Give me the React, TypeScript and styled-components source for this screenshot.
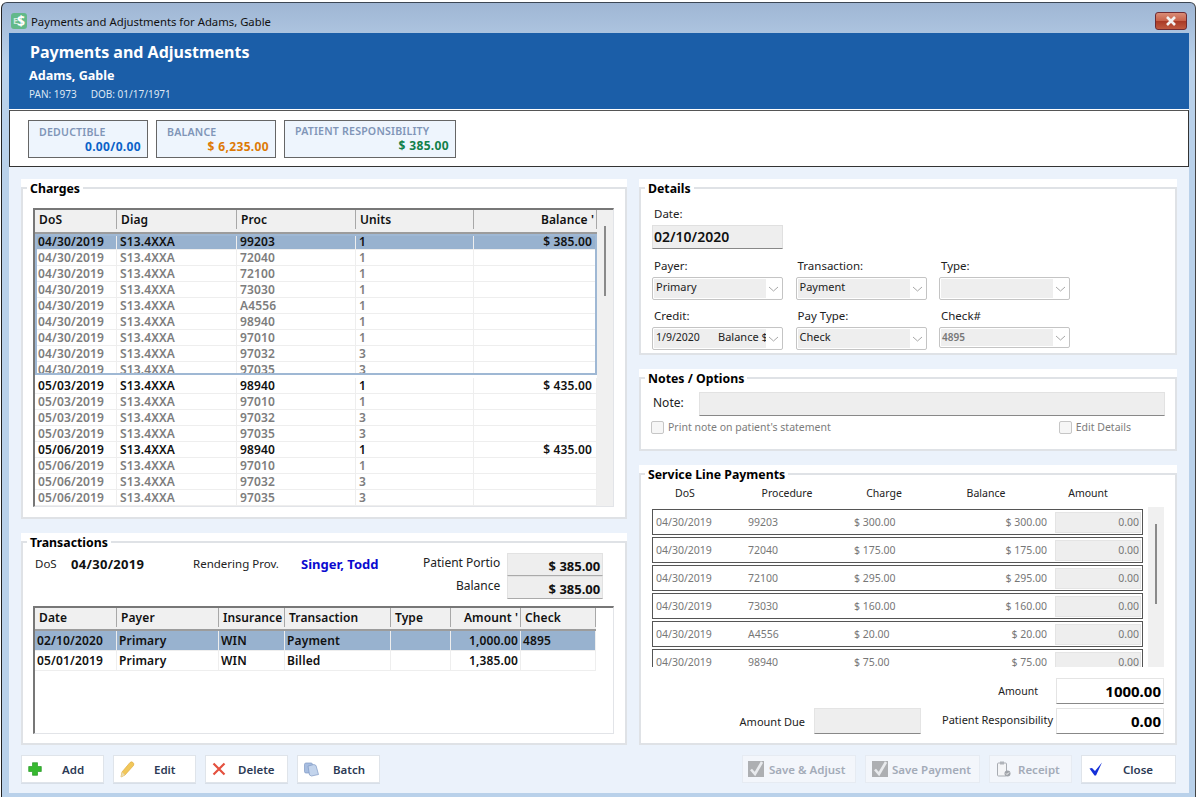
import React from "react";
import styled, { createGlobalStyle } from "styled-components";

const Global = createGlobalStyle`
  html, body { margin: 0; padding: 0; background: #fff; }
  * { box-sizing: border-box; }
  body { font-family: "Noto Sans", "Open Sans", "Liberation Sans", sans-serif; font-size: 12px; color: #111; }
`;

const Frame = styled.div`
  width: 1195px; height: 795px; margin: 2px 0 0 1px; overflow: hidden;
  background: linear-gradient(#9fb6d4 0, #b9d1ea 60px, #b9d1ea 100%);
  border-top: 1px solid #3c4654; border-left: 1px solid #222; border-right: 1px solid #444;
  border-top-left-radius: 6px; border-top-right-radius: 6px;
  display: flex; flex-direction: column;
`;
const TitleBar = styled.div`
  height: 30px; flex: none; display: flex; align-items: center; padding: 6px 8px 0 9px; gap: 4px;
  font-size: 11.3px; color: #111;
`;
const AppIcon = styled.div`
  width: 16px; height: 16px; border-radius: 3px; background: #62b98a; color: #fff;
  font-size: 14px; font-weight: 700; display: flex; align-items: center; justify-content: center; line-height: 16px;
`;
const AppIconE = styled.span`font-size: 9px; color: #cfe8da; margin-right: -1px;`;
const CloseBtn = styled.div`
  margin-left: auto; width: 32px; height: 18px; border-radius: 3px; border: 1px solid #6e2b33;
  background: linear-gradient(#d98c76 0, #c8624a 48%, #a93a26 52%, #c05a40 100%);
  display: flex; align-items: center; justify-content: center;
`;
const Client = styled.div`
  margin: 0 6px 0 7px; flex: 1; display: flex; flex-direction: column; min-height: 0;
`;
const Banner = styled.div`
  height: 77px; flex: none; background: #1b5ea8; color: #fff; padding: 8px 0 0 20px; border-bottom: 1px solid #fff;
`;
const BannerTitle = styled.div`font-size: 16px; font-weight: 700; line-height: 22px; padding-left: 1px;`;
const BannerName = styled.div`font-size: 12.6px; font-weight: 700; line-height: 16px; margin-top: 5px;`;
const BannerMeta = styled.div`font-size: 10px; line-height: 14px; margin-top: 3px; color: #dfe8f4; display: flex; gap: 14px;`;
const Band = styled.div`
  height: 57px; flex: none; background: #fff; border: 1px solid #333; border-top-color: #555; padding: 9px 18px; display: flex; gap: 8px;
`;
const Stat = styled.div<{ $w: number; $top: number }>`
  width: ${p => p.$w}px; height: 38px; border: 1px solid #666; background: #eef5fd; padding: ${p => p.$top}px 6px 0 10px;
  display: flex; flex-direction: column;
`;
const StatLabel = styled.div`font-size: 10.6px; font-weight: 600; color: #8095b8; line-height: 14px; white-space: nowrap; letter-spacing: .2px;`;
const StatValue = styled.div<{ $c: string }>`font-size: 12px; font-weight: 700; color: ${p => p.$c}; text-align: right; line-height: 16px; letter-spacing: .35px;`;
const Body = styled.div`
  flex: 1; background: #ebf2fb; padding: 12px 0 0 12px; display: flex; flex-direction: column; min-height: 0; margin-bottom: 4px;
`;
const Columns = styled.div`
  display: grid; grid-template-columns: 606px 538px; gap: 12px; height: 566px;
`;
const Column = styled.div`display: flex; flex-direction: column; gap: 14px; min-height: 0;`;
const Panel = styled.div<{ $h: number }>`
  height: ${p => p.$h}px; background: #fff; padding-top: 3px; display: flex;
`;
const Fieldset = styled.fieldset`
  flex: 1; min-width: 0; margin: 0; border: 2px solid #dfe2e6; padding: 0; position: relative;
`;
const Legend = styled.legend`
  font-size: 12.3px; font-weight: 700; padding: 0 3px; margin-left: 4px; line-height: 12px; color: #000; position: relative; top: 1px;
`;
/* --- grid tables --- */
const TableBox = styled.div<{ $h: number; $top: number }>`
  margin: ${p => p.$top}px 11px 0 10px; height: ${p => p.$h}px; border: 1px solid #e2e4e8; border-top: 2px solid #777; border-left: 2px solid #777;
  position: relative; overflow: hidden; display: flex;
`;
const TableMain = styled.div<{ $w: number }>`width: ${p => p.$w}px; flex: none; display: flex; flex-direction: column;`;
const HeadRow = styled.div<{ $cols: string; $h: number; $pb?: number }>`
  display: grid; grid-template-columns: ${p => p.$cols}; height: ${p => p.$h}px; background: #f0f0f0; border-bottom: 2px solid #9c9c9c;
  flex: none; padding-bottom: ${p => p.$pb ?? 0}px;
`;
const HeadCell = styled.div<{ $right?: boolean }>`
  font-size: 12px; font-weight: 600; padding: 0 2px 0 4px; display: flex; align-items: center; white-space: nowrap; overflow: hidden;
  justify-content: ${p => (p.$right ? "flex-end" : "flex-start")}; border-right: 1px solid #a8a8a8; color: #111; letter-spacing: .1px;
`;
const Row = styled.div<{ $cols: string; $h: number; $sel?: boolean; $bold?: boolean }>`
  display: grid; grid-template-columns: ${p => p.$cols}; height: ${p => p.$h}px; flex: none;
  background: ${p => (p.$sel ? "#98b2cf" : "#fff")}; border-bottom: 1px solid #eee;
  color: ${p => (p.$sel || p.$bold ? "#111" : "#7d7d7d")};
`;
const Cell = styled.div<{ $right?: boolean; $pl?: number; $pr?: number }>`
  font-size: 12px; font-weight: 600; padding: 0 ${p => p.$pr ?? 2}px 0 ${p => p.$pl ?? 2}px; display: flex; align-items: center; white-space: nowrap; overflow: hidden; line-height: 15px;
  justify-content: ${p => (p.$right ? "flex-end" : "flex-start")}; border-right: 1px solid #eee; letter-spacing: .15px;
`;
const Group = styled.div`padding-bottom: 3px; height: 144px; flex: none;`;
const GroupView = styled.div`height: 141px; overflow: hidden; outline: 2px solid #9fb8d4; outline-offset: -2px;`;
const VScroll = styled.div<{ $thumbTop: number; $thumbH: number }>`
  width: 16px; flex: none; background: #f0f0f0; position: relative;
  &::after { content: ""; position: absolute; left: 7px; width: 2px; top: ${p => p.$thumbTop}px; height: ${p => p.$thumbH}px; background: #8a8a8a; }
`;
/* --- transactions --- */
const InfoRow = styled.div`
  height: 50px; margin: 4px 23px 0 12px; display: flex; position: relative;
`;
const InfoLabel = styled.div<{ $w: number }>`width: ${p => p.$w}px; font-size: 11.5px; line-height: 18px; padding-top: 3px; color: #222; flex: none;`;
const InfoDate = styled.div`width: 122px; font-size: 13px; font-weight: 700; line-height: 18px; padding-top: 3px; letter-spacing: .3px; flex: none;`;
const InfoName = styled.div`width: 122px; font-size: 13px; font-weight: 700; line-height: 18px; padding-top: 3px; color: #0a0ad0; flex: none;`;
const Totals = styled.div`margin-left: auto; display: grid; grid-template-columns: auto 96px; align-content: start; column-gap: 7px; margin-top: 1px;`;
const TotalLabel = styled.div`font-size: 12px; text-align: right; line-height: 18px; color: #222; padding-top: 1px; white-space: nowrap;`;
const TotalField = styled.div`
  height: 23px; background: #eee; border: 1px solid #e2e2e2; border-bottom: 1px solid #aaa;
  font-size: 13px; font-weight: 700; text-align: right; line-height: 24px; padding-right: 2px;
`;
/* --- details --- */
const FieldLabel = styled.div`font-size: 11.5px; line-height: 14px; color: #222; margin: 0 0 4px 2px;`;
const DateField = styled.div`
  width: 131px; height: 24px; background: #eee; border: 1px solid #e0e0e0; border-bottom: 1px solid #888;
  font-size: 14px; font-weight: 600; line-height: 21px; padding-left: 1px; letter-spacing: 0;
`;
const DetailsInner = styled.div`padding: 13px 12px 0 11px;`;
const ComboGrid = styled.div`
  display: grid; grid-template-columns: repeat(3, 131px); column-gap: 12.5px; row-gap: 9px; margin-top: 10px;
`;
const Combo = styled.div<{ $small?: boolean }>`
  height: ${p => (p.$small ? 21 : 23)}px; border: 1px solid #c4c4c4; border-radius: 2px; background: #fff; padding: 1px; display: flex; position: relative;
  font-size: 11px; line-height: 16px;
`;
const ComboFace = styled.div<{ $dim?: boolean }>`
  width: 112px; background: #eee; padding: 0 ${p => (p.$dim ? 1 : 2)}px; white-space: nowrap; overflow: hidden; color: ${p => (p.$dim ? "#777" : "#222")};
  font-weight: ${p => (p.$dim ? 600 : 400)}; font-size: ${p => (p.$dim ? "10px" : "11px")}; display: flex; align-items: flex-start;
`;
const CreditDate = styled.span`width: 62px; flex: none; font-size: 10.5px;`;
const Chevron = styled.div`flex: 1; display: flex; align-items: center; justify-content: center; padding-top: 1px;`;
const NotesInner = styled.div`padding: 8px 10px 0 11px;`;
const NoteRow = styled.div`display: flex; align-items: center; gap: 15px; font-size: 12px; color: #222; padding-left: 1px;`;
const NoteLabel = styled.span`margin-bottom: 3px;`;
const NoteField = styled.div`flex: 1; height: 24px; background: #eee; border: 1px solid #e2e2e2; border-bottom: 1px solid #888;`;
const CheckRow = styled.div`display: flex; justify-content: space-between; margin: 3px 0 0 -1px; padding-right: 34px;`;
const CheckItem = styled.label`display: flex; align-items: center; gap: 4px; font-size: 10.5px; color: #7c7c7c; line-height: 16px;`;
const Box = styled.span`width: 13px; height: 13px; border: 1px solid #c6c6c6; border-radius: 2px; background: #f6f6f6; display: inline-block;`;
/* --- service lines --- */
const SvcHead = styled.div`
  display: grid; grid-template-columns: 88px 116px 78px 126px 78px; margin: 4px 0 0 0; height: 18px; align-items: center; font-size: 10.5px; color: #222;
`;
const SvcHeadCell = styled.div`text-align: center;`;
const SvcWrap = styled.div`display: flex; margin: 5px 11px 0 11px; height: 160px; gap: 5px;`;
const SvcList = styled.div`width: 492px; overflow: hidden; display: flex; flex-direction: column; gap: 2px; padding-top: 2px;`;
const SvcRow = styled.div`
  height: 26px; flex: none; border: 1px solid #555; display: grid; grid-template-columns: 92px 106px 100px 1fr 95px; align-items: center;
  font-size: 10.5px; color: #777; padding-left: 3px;
`;
const SvcAmt = styled.div`
  height: 21px; margin: 0 1px 0 8px; background: #eee; border: 1px solid #e4e4e4; text-align: right; padding-right: 1px; line-height: 19px;
`;
const Right = styled.div`text-align: right;`;
const Totals2 = styled.div`margin: 11px 11px 0 0; display: flex; flex-direction: column; gap: 4px;`;
const TotalLine = styled.div`display: flex; justify-content: flex-end; align-items: center; height: 26px; font-size: 11px; color: #222;`;
const BigField = styled.div<{ $grey?: boolean }>`
  width: ${p => (p.$grey ? 107 : 108)}px; height: 26px; background: ${p => (p.$grey ? "#eee" : "#fff")};
  border: 1px solid #e4e4e4; border-bottom: 1px solid #888; font-size: 15px; font-weight: 700; text-align: right; line-height: 25px; padding-right: 2px; color: #000;
`;
const DueLabel = styled.span`margin-right: 9px;`;
const RespLabel = styled.span`margin: 0 3px 0 21px; position: relative; top: -2px;`;
const AmtLabel = styled.span`margin-right: 18px; font-size: 10.5px;`;
/* --- footer --- */
const Footer = styled.div`display: flex; justify-content: space-between; margin-top: 10px; width: 1155px;`;
const BtnGroup = styled.div`display: flex; gap: 9px;`;
const Btn = styled.div<{ $w: number; $off?: boolean; $gap: number; $pad: number }>`
  width: ${p => p.$w}px; height: 28px; border: 1px solid #dfe4ea; box-shadow: 0 1px 0 #d8dfe8;
  ${p => p.$off ? "background: #f3f6fb; color: #a3abb8; border-color: #e6ebf2; box-shadow: none;" : "background: #fff; color: #2c3a55;"}
  display: flex; align-items: center; padding-left: ${p => p.$pad - 1}px; gap: ${p => p.$gap}px; font-size: 11.5px; font-weight: 600; white-space: nowrap;
  & svg { flex: none; }
`;

const chevron = (
  <svg width="11" height="6" viewBox="0 0 11 6" fill="none"><path d="M1 1l4.5 4L10 1" stroke="#a8a8a8" strokeWidth="1" /></svg>
);
const checkGrey = (
  <svg width="16" height="16" viewBox="0 0 16 16"><rect x="0" y="0" width="16" height="16" fill="#adafb2" /><path d="M3 8.5l4 4.5 7-12" fill="none" stroke="#e9ebee" strokeWidth="2.6" /></svg>
);

const chargeCols = "82px 120px 119px 118px 123px";
type C = [string, string, string, string, string, boolean?, boolean?];
const firstGroup: C[] = [
  ["04/30/2019", "S13.4XXA", "99203", "1", "$ 385.00", true, true],
  ["04/30/2019", "S13.4XXA", "72040", "1", ""],
  ["04/30/2019", "S13.4XXA", "72100", "1", ""],
  ["04/30/2019", "S13.4XXA", "73030", "1", ""],
  ["04/30/2019", "S13.4XXA", "A4556", "1", ""],
  ["04/30/2019", "S13.4XXA", "98940", "1", ""],
  ["04/30/2019", "S13.4XXA", "97010", "1", ""],
  ["04/30/2019", "S13.4XXA", "97032", "3", ""],
  ["04/30/2019", "S13.4XXA", "97035", "3", ""],
];
const rest: C[] = [
  ["05/03/2019", "S13.4XXA", "98940", "1", "$ 435.00", true],
  ["05/03/2019", "S13.4XXA", "97010", "1", ""],
  ["05/03/2019", "S13.4XXA", "97032", "3", ""],
  ["05/03/2019", "S13.4XXA", "97035", "3", ""],
  ["05/06/2019", "S13.4XXA", "98940", "1", "$ 435.00", true],
  ["05/06/2019", "S13.4XXA", "97010", "1", ""],
  ["05/06/2019", "S13.4XXA", "97032", "3", ""],
  ["05/06/2019", "S13.4XXA", "97035", "3", ""],
];
const ChargeRow = ({ r }: { r: C }) => (
  <Row $cols={chargeCols} $h={16} $bold={r[5]} $sel={r[6]}>
    <Cell $pl={3}>{r[0]}</Cell><Cell $pl={3}>{r[1]}</Cell><Cell $pl={3}>{r[2]}</Cell><Cell $pl={3}>{r[3]}</Cell><Cell $right $pr={4}>{r[4]}</Cell>
  </Row>
);
const txCols = "82px 102px 66px 106px 60px 70px 75px";
const tx = [
  ["02/10/2020", "Primary", "WIN", "Payment", "", "1,000.00", "4895"],
  ["05/01/2019", "Primary", "WIN", "Billed", "", "1,385.00", ""],
];
const svc = [
  ["99203", "$ 300.00"], ["72040", "$ 175.00"], ["72100", "$ 295.00"], ["73030", "$ 160.00"], ["A4556", "$ 20.00"], ["98940", "$ 75.00"],
];

export default function App() {
  return (
    <Frame>
      <Global />
      <TitleBar>
        <AppIcon><AppIconE>E</AppIconE>$</AppIcon>
        <span>Payments and Adjustments for Adams, Gable</span>
        <CloseBtn>
          <svg width="14" height="10" viewBox="0 0 14 10"><path d="M3 1l8 8M11 1L3 9" stroke="#f2f2f2" strokeWidth="2.6" fill="none" /></svg>
        </CloseBtn>
      </TitleBar>
      <Client>
        <Banner>
          <BannerTitle>Payments and Adjustments</BannerTitle>
          <BannerName>Adams, Gable</BannerName>
          <BannerMeta><span>PAN: 1973</span><span>DOB: 01/17/1971</span></BannerMeta>
        </Banner>
        <Band>
          <Stat $w={120} $top={4}><StatLabel>DEDUCTIBLE</StatLabel><StatValue $c="#0a62c8">0.00/0.00</StatValue></Stat>
          <Stat $w={120} $top={4}><StatLabel>BALANCE</StatLabel><StatValue $c="#dd7a06">$ 6,235.00</StatValue></Stat>
          <Stat $w={172} $top={3}><StatLabel>PATIENT RESPONSIBILITY</StatLabel><StatValue $c="#12804a">$ 385.00</StatValue></Stat>
        </Band>
        <Body>
          <Columns>
            <Column>
              <Panel $h={340}>
                <Fieldset>
                  <Legend>Charges</Legend>
                  <TableBox $h={299} $top={14}>
                    <TableMain $w={562}>
                      <HeadRow $cols={chargeCols} $h={24} $pb={3}>
                        <HeadCell>DoS</HeadCell><HeadCell>Diag</HeadCell><HeadCell>Proc</HeadCell><HeadCell>Units</HeadCell><HeadCell $right>Balance '</HeadCell>
                      </HeadRow>
                      <Group><GroupView>{firstGroup.map((r, i) => <ChargeRow key={i} r={r} />)}</GroupView></Group>
                      {rest.map((r, i) => <ChargeRow key={i} r={r} />)}
                    </TableMain>
                    <VScroll $thumbTop={16} $thumbH={70} />
                  </TableBox>
                </Fieldset>
              </Panel>
              <Panel $h={212}>
                <Fieldset>
                  <Legend>Transactions</Legend>
                  <InfoRow>
                    <InfoLabel $w={36}>DoS</InfoLabel>
                    <InfoDate>04/30/2019</InfoDate>
                    <InfoLabel $w={108}>Rendering Prov.</InfoLabel>
                    <InfoName>Singer, Todd</InfoName>
                    <Totals>
                      <TotalLabel>Patient Portio</TotalLabel><TotalField>$ 385.00</TotalField>
                      <TotalLabel>Balance</TotalLabel><TotalField>$ 385.00</TotalField>
                    </Totals>
                  </InfoRow>
                  <TableBox $h={128} $top={4}>
                    <TableMain $w={561}>
                      <HeadRow $cols={txCols} $h={23} $pb={2}>
                        <HeadCell>Date</HeadCell><HeadCell>Payer</HeadCell><HeadCell>Insurance</HeadCell><HeadCell>Transaction</HeadCell><HeadCell>Type</HeadCell><HeadCell $right>Amount '</HeadCell><HeadCell>Check</HeadCell>
                      </HeadRow>
                      {tx.map((r, i) => (
                        <Row key={i} $cols={txCols} $h={20} $bold $sel={i === 0}>
                          <Cell>{r[0]}</Cell><Cell>{r[1]}</Cell><Cell>{r[2]}</Cell><Cell>{r[3]}</Cell><Cell>{r[4]}</Cell><Cell $right>{r[5]}</Cell><Cell>{r[6]}</Cell>
                        </Row>
                      ))}
                    </TableMain>
                  </TableBox>
                </Fieldset>
              </Panel>
            </Column>
            <Column>
              <Panel $h={176}>
                <Fieldset>
                  <Legend>Details</Legend>
                  <DetailsInner>
                    <FieldLabel>Date:</FieldLabel>
                    <DateField>02/10/2020</DateField>
                    <ComboGrid>
                      <div><FieldLabel>Payer:</FieldLabel><Combo><ComboFace>Primary</ComboFace><Chevron>{chevron}</Chevron></Combo></div>
                      <div><FieldLabel>Transaction:</FieldLabel><Combo><ComboFace>Payment</ComboFace><Chevron>{chevron}</Chevron></Combo></div>
                      <div><FieldLabel>Type:</FieldLabel><Combo><ComboFace /><Chevron>{chevron}</Chevron></Combo></div>
                      <div><FieldLabel>Credit:</FieldLabel><Combo><ComboFace><CreditDate>1/9/2020</CreditDate><span>Balance $</span></ComboFace><Chevron>{chevron}</Chevron></Combo></div>
                      <div><FieldLabel>Pay Type:</FieldLabel><Combo><ComboFace>Check</ComboFace><Chevron>{chevron}</Chevron></Combo></div>
                      <div><FieldLabel>Check#</FieldLabel><Combo $small><ComboFace $dim>4895</ComboFace><Chevron>{chevron}</Chevron></Combo></div>
                    </ComboGrid>
                  </DetailsInner>
                </Fieldset>
              </Panel>
              <Panel $h={82}>
                <Fieldset>
                  <Legend>Notes / Options</Legend>
                  <NotesInner>
                    <NoteRow><NoteLabel>Note:</NoteLabel><NoteField /></NoteRow>
                    <CheckRow>
                      <CheckItem><Box />Print note on patient's statement</CheckItem>
                      <CheckItem><Box />Edit Details</CheckItem>
                    </CheckRow>
                  </NotesInner>
                </Fieldset>
              </Panel>
              <Panel $h={280}>
                <Fieldset>
                  <Legend>Service Line Payments</Legend>
                  <SvcHead>
                    <SvcHeadCell>DoS</SvcHeadCell><SvcHeadCell>Procedure</SvcHeadCell><SvcHeadCell>Charge</SvcHeadCell><SvcHeadCell>Balance</SvcHeadCell><SvcHeadCell>Amount</SvcHeadCell>
                  </SvcHead>
                  <SvcWrap>
                    <SvcList>
                      {svc.map(s => (
                        <SvcRow key={s[0]}>
                          <span>04/30/2019</span><span>{s[0]}</span><span>{s[1]}</span><Right>{s[1]}</Right><SvcAmt>0.00</SvcAmt>
                        </SvcRow>
                      ))}
                    </SvcList>
                    <VScroll $thumbTop={17} $thumbH={80} />
                  </SvcWrap>
                  <Totals2>
                    <TotalLine><AmtLabel>Amount</AmtLabel><BigField>1000.00</BigField></TotalLine>
                    <TotalLine>
                      <DueLabel>Amount Due</DueLabel><BigField $grey />
                      <RespLabel>Patient Responsibility</RespLabel><BigField>0.00</BigField>
                    </TotalLine>
                  </Totals2>
                </Fieldset>
              </Panel>
            </Column>
          </Columns>
          <Footer>
            <BtnGroup>
              <Btn $w={83} $pad={7} $gap={20}>
                <svg width="14" height="14" viewBox="0 0 14 14"><path d="M4.5 0.7h5v3.8h3.8v5H9.500v3.800h-5V9.500H0.700v-5h3.800z" fill="#36b92f" stroke="#2a9a2a" strokeWidth=".7" /></svg>
                <span>Add</span>
              </Btn>
              <Btn $w={83} $pad={7} $gap={19}>
                <svg width="15" height="17" viewBox="0 0 15 17"><path d="M1 16l1-5L10 1.500q1.500-1.300 3 0t.5 3L5 14z" fill="#f1c75a" stroke="#dfae45" strokeWidth=".7" /><path d="M1 16l1-5 3 3z" fill="#ecdcae" /></svg>
                <span>Edit</span>
              </Btn>
              <Btn $w={83} $pad={7} $gap={12}>
                <svg width="14" height="14" viewBox="0 0 14 14"><path d="M1.500 1.500l11 11M12.500 1.500l-11 11" stroke="#e4513f" strokeWidth="2.200" /></svg>
                <span>Delete</span>
              </Btn>
              <Btn $w={83} $pad={7} $gap={14}>
                <svg width="15" height="15" viewBox="0 0 15 15"><rect x="0.500" y="1" width="8" height="10" rx="1.500" fill="#a7bde0" stroke="#7f9ac4" strokeWidth=".7" /><path d="M4 4l6-1.500 2 1 2.500 9-7 1.500-2-1z" fill="#c3d4ec" stroke="#7f9ac4" strokeWidth=".7" /></svg>
                <span>Batch</span>
              </Btn>
            </BtnGroup>
            <BtnGroup>
              <Btn $w={114} $off $pad={6} $gap={5}>{checkGrey}<span>Save &amp; Adjust</span></Btn>
              <Btn $w={115} $off $pad={7} $gap={4}>{checkGrey}<span>Save Payment</span></Btn>
              <Btn $w={83} $off $pad={8} $gap={7}>
                <svg width="14" height="16" viewBox="0 0 14 16"><rect x="0.500" y="2" width="9" height="13" rx="1" fill="#f4f5f7" stroke="#a8acb2" /><rect x="3" y="0.500" width="4" height="3" fill="#b0b4ba" /><circle cx="10.500" cy="12.500" r="3" fill="#a0a4aa" /><path d="M9 12.500l1 1 2-2" stroke="#fff" fill="none" /></svg>
                <span>Receipt</span>
              </Btn>
              <Btn $w={95} $pad={8} $gap={20}>
                <svg width="14" height="14" viewBox="0 0 14 14"><path d="M0.500 6.500l2.500-.5L6 9 13 0.500 7 13.500h-1.500z" fill="#1530d8" /></svg>
                <span>Close</span>
              </Btn>
            </BtnGroup>
          </Footer>
        </Body>
      </Client>
    </Frame>
  );
}
